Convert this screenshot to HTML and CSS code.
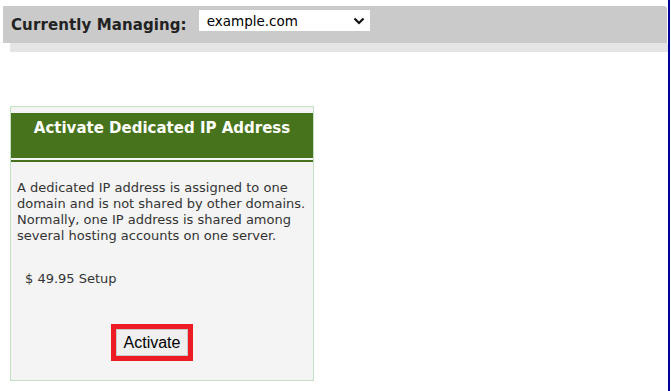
FILE: index.html
```html
<!DOCTYPE html>
<html>
<head>
<meta charset="utf-8">
<link rel="stylesheet" href="styles.css">
</head>
<body>
<div class="page">
  <div class="topbar">
    <span class="label">Currently Managing:</span>
    <div class="select-wrap">
      <select class="domain-select"><option>example.com</option></select>
      <svg class="chevron" width="12" height="8" viewBox="0 0 12 8"><path d="M1.5 1.5 L6 6 L10.5 1.5" fill="none" stroke="#111" stroke-width="2.2"/></svg>
    </div>
  </div>
  <div class="strip"></div>

  <div class="card">
    <div class="card-head">Activate Dedicated IP Address</div>
    <div class="card-rule"></div>
    <p class="desc">A dedicated IP address is assigned to one domain and is not shared by other domains. Normally, one IP address is shared among several hosting accounts on one server.</p>
    <p class="price">$ 49.95 Setup</p>
    <div class="btn-row">
      <div class="btn-frame"><button class="btn">Activate</button></div>
    </div>
  </div>
</div>
</body>
</html>
```

FILE: styles.css
```css
html, body {
  margin: 0;
  padding: 0;
  background: #ffffff;
}
.page {
  width: 670px;
  height: 391px;
  border-right: 2px solid #0000a0;
  padding-top: 6px;
  box-sizing: border-box;
  font-family: "DejaVu Sans", Verdana, sans-serif;
}
.topbar {
  margin-left: 3px;
  width: 664px;
  height: 37px;
  background: #cacaca;
  border-top-right-radius: 3px;
  display: flex;
  align-items: flex-start;
  box-sizing: border-box;
  padding-left: 8px;
}
.label {
  font-weight: bold;
  font-size: 15px;
  color: #222;
  margin-top: 10px;
  line-height: 18px;
  letter-spacing: 0.1px;
}
.select-wrap {
  position: relative;
  margin-left: 12px;
  margin-top: 4px;
  width: 171px;
  height: 21px;
  background: #fff;
}
.domain-select {
  appearance: none;
  -webkit-appearance: none;
  border: none;
  outline: none;
  background: transparent;
  width: 100%;
  height: 21px;
  padding: 0 0 0 8px;
  margin: 0;
  font-family: "DejaVu Sans", Verdana, sans-serif;
  font-size: 13.5px;
  color: #000;
}
.chevron {
  position: absolute;
  right: 5px;
  top: 7px;
}
.strip {
  margin-left: 10px;
  width: 658px;
  height: 9px;
  background: #e5e5e5;
}
.card {
  margin-top: 54px;
  margin-left: 10px;
  width: 304px;
  height: 275px;
  box-sizing: border-box;
  border: 1px solid #c2e2c2;
  background: #f4f4f4;
  padding-top: 6px;
}
.card-head {
  height: 45px;
  background: #46731b;
  color: #fff;
  font-weight: bold;
  font-size: 15px;
  text-align: center;
  line-height: 20px;
  padding-top: 5px;
  box-sizing: border-box;
}
.card-rule {
  margin-top: 2px;
  height: 2px;
  background: #46731b;
}
.desc {
  margin: 18px 0 0 6px;
  font-size: 13px;
  line-height: 16px;
  color: #333;
  width: 290px;
}
.price {
  margin: 27px 0 0 14px;
  font-size: 13px;
  line-height: 16px;
  color: #333;
}
.btn-row {
  margin-top: 37px;
  padding-left: 100px;
  display: flex;
}
.btn-frame {
  border: 5px solid #ed1c24;
  display: flex;
}
.btn {
  width: 72px;
  height: 27px;
  margin: 0;
  padding: 0;
  border: 1px solid #c8c8c8;
  background: #efefef;
  font-family: "Liberation Sans", Arial, sans-serif;
  font-size: 16px;
  color: #000;
}
```
